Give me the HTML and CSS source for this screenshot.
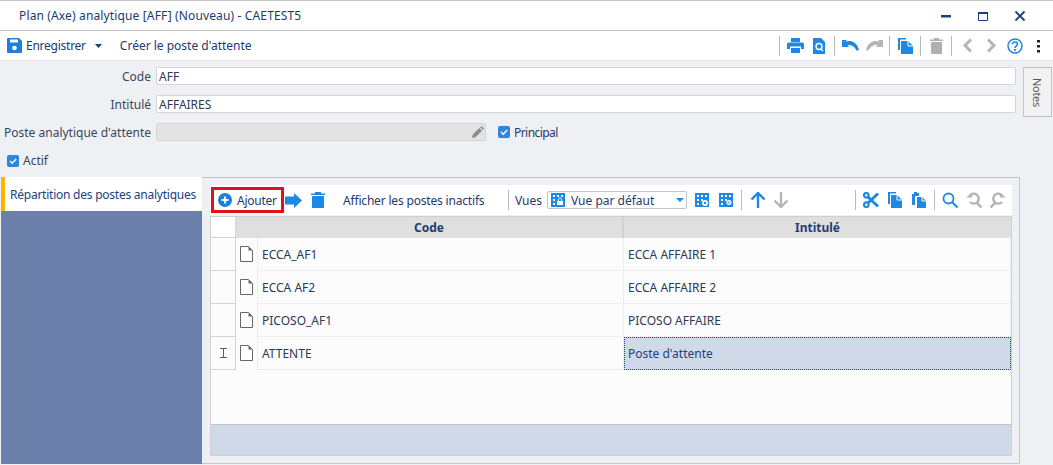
FILE: index.html
```html
<!DOCTYPE html>
<html lang="fr">
<head>
<meta charset="utf-8">
<title>Plan (Axe) analytique</title>
<link rel="stylesheet" href="styles.css">
</head>
<body>
<div class="window">
  <header class="titlebar">
    <span class="title">Plan (Axe) analytique [AFF] (Nouveau) - CAETEST5</span>
    <div class="winctl">
      <svg width="14" height="14" viewBox="0 0 14 14"><path d="M2 6h10v2.500H2z" fill="#1d3f7f"/></svg>
      <svg width="14" height="14" viewBox="0 0 14 14"><path d="M2.500 3.500h9v8h-9z" fill="none" stroke="#1d3f7f"/><path d="M2 3h10v2H2z" fill="#1d3f7f"/></svg>
      <svg width="14" height="14" viewBox="0 0 14 14"><path d="M2.500 2.500l9 9M11.500 2.500l-9 9" stroke="#1d3f7f" stroke-width="1.800"/></svg>
    </div>
  </header>
  <nav class="toolbar">
    <svg class="save" width="15" height="15" viewBox="0 0 15 15"><path d="M1 0h11l3 3v11a1 1 0 0 1-1 1H1a1 1 0 0 1-1-1V1a1 1 0 0 1 1-1z" fill="#1e7fd6"/><path d="M3 1.500h8v3H3z" fill="#fff"/><circle cx="7.500" cy="10" r="2.300" fill="#fff"/></svg>
    <span class="tb-text enreg">Enregistrer</span>
    <svg class="caret" width="7" height="4" viewBox="0 0 7 4"><path d="M0 0h7L3.500 4z" fill="#1d3f6f"/></svg>
    <span class="tb-text create">Créer le poste d'attente</span>
    <div class="tb-right">
      <i class="sep"></i>
      <span class="btn"><svg width="17" height="15" viewBox="0 0 17 15"><path d="M4 0h9v4H4zM1.500 4.500h14A1.500 1.500 0 0 1 17 6v5h-3V8.500H3V11H0V6a1.500 1.500 0 0 1 1.500-1.500zM4 10h9v5H4z" fill="#1e88e5"/></svg></span>
      <span class="btn"><svg width="12" height="16" viewBox="0 0 12 16"><path d="M0 0h8l4 4v12H0z" fill="#1e88e5"/><circle cx="6" cy="8.500" r="3" fill="none" stroke="#fff" stroke-width="1.400"/><path d="M8 11l2 2" stroke="#fff" stroke-width="1.400"/></svg></span>
      <i class="sep"></i>
      <span class="btn"><svg width="17" height="11" viewBox="0 0 17 11"><path d="M0 0l5 0-1.500 1.800C8 0 14 1 17 9.500L15 11C12 5.500 8.500 4.500 5.500 5L7 7H0z" fill="#1e88e5"/></svg></span>
      <span class="btn"><svg width="17" height="11" viewBox="0 0 17 11"><path d="M17 0l-5 0 1.500 1.800C9 0 3 1 0 9.500L2 11C5 5.500 8.500 4.500 11.500 5L10 7h7z" fill="#b5b5b5"/></svg></span>
      <i class="sep"></i>
      <span class="btn"><svg width="15" height="16" viewBox="0 0 15 16"><path d="M0 0h8v1.500H2V12H0z" fill="#1e88e5"/><path d="M3 3h7l5 5v8H3z" fill="#1e88e5"/><path d="M10 3v5h5" fill="none" stroke="#fff"/></svg></span>
      <i class="sep"></i>
      <span class="btn"><svg width="13" height="16" viewBox="0 0 13 16"><path d="M4 0h5v1.500h4V3H0V1.500h4zM1 4h11v12H1z" fill="#b0b0b0"/></svg></span>
      <i class="sep"></i>
      <span class="btn"><svg width="11" height="15" viewBox="0 0 11 15"><path d="M9 1.500L3 7.500l6 6" fill="none" stroke="#b5b5b5" stroke-width="3"/></svg></span>
      <span class="btn"><svg width="11" height="15" viewBox="0 0 11 15"><path d="M2 1.500l6 6-6 6" fill="none" stroke="#b5b5b5" stroke-width="3"/></svg></span>
      <span class="btn"><svg width="16" height="16" viewBox="0 0 16 16"><circle cx="8" cy="8" r="7" fill="none" stroke="#1e88e5" stroke-width="1.500"/><path d="M5.500 6.200C5.500 4.800 6.700 4 8 4s2.500.8 2.500 2.200c0 1.900-2.500 1.900-2.500 3.800" fill="none" stroke="#1e88e5" stroke-width="1.600"/><path d="M7 11h2v1.800H7z" fill="#1e88e5"/></svg></span>
      <span class="btn"><svg width="4" height="14" viewBox="0 0 4 14"><path d="M0 1h3v2.500H0zM0 6h3v2.500H0zM0 11h3v2.500H0z" fill="#222"/></svg></span>
    </div>
  </nav>
  <section class="formarea">
    <div class="form">
      <label class="lbl">Code</label>
      <div class="input wide">AFF</div>
      <label class="lbl">Intitulé</label>
      <div class="input wide">AFFAIRES</div>
      <label class="lbl">Poste analytique d'attente</label>
      <div class="attente">
        <div class="input disabled"><svg width="12" height="12" viewBox="0 0 12 12"><path d="M0 12l.8-3.500 6.500-6.500 2.700 2.700-6.500 6.500zM8.200 1.200L9.400 0 12 2.600l-1.200 1.200z" fill="#8c8c8c"/></svg></div>
        <span class="check"><svg width="12" height="12" viewBox="0 0 12 12"><rect width="12" height="12" rx="2" fill="#2e86de"/><path d="M3 6l2.200 2.200L9.200 4" fill="none" stroke="#fff" stroke-width="1.400"/></svg><span class="principal">Principal</span></span>
      </div>
      <span class="check actif"><svg width="12" height="12" viewBox="0 0 12 12"><rect width="12" height="12" rx="2" fill="#2e86de"/><path d="M3 6l2.200 2.200L9.200 4" fill="none" stroke="#fff" stroke-width="1.400"/></svg><span>Actif</span></span>
    </div>
    <div class="notes"><span>Notes</span></div>
  </section>
  <main class="main">
    <aside class="side">
      <div class="tab">Répartition des postes analytiques</div>
      <div class="side-fill"></div>
    </aside>
    <section class="panel">
      <div class="subbar">
        <button class="add"><svg width="14" height="14" viewBox="0 0 14 14"><circle cx="7" cy="7" r="7" fill="#1e7fd6"/><path d="M3.500 7h7M7 3.500v7" stroke="#fff" stroke-width="1.800"/></svg>Ajouter</button>
        <svg class="arrow" width="17" height="15" viewBox="0 0 17 15"><path d="M0 3.500h9V0l8 7.500-8 7.500v-3.500H0z" fill="#1e88e5"/></svg>
        <svg class="trash" width="14" height="16" viewBox="0 0 14 16"><path d="M4 0h6v1.500h4V3H0V1.500h4zM1 4h12v12H1z" fill="#1e88e5"/></svg>
        <span class="inactive">Afficher les postes inactifs</span>
        <i class="sep s1"></i>
        <span class="vues">Vues</span>
        <div class="select">
          <svg width="14" height="14" viewBox="0 0 14 14"><path d="M0 0h14v14H0z" fill="#1e88e5"/><path d="M2 2h2v2H2zM6 2h2v2H6zM10 2h2v2h-2zM2 6h2v2H2zM2 10h2v2H2zM6 8h6v4H6z" fill="#fff"/><path d="M7.500 8V6.500a1.500 1.500 0 0 1 3 0V8" fill="none" stroke="#fff"/></svg>
          <span class="select-text">Vue par défaut</span>
          <svg class="select-caret" width="8" height="4" viewBox="0 0 8 4"><path d="M0 0h8L4 4z" fill="#1e88e5"/></svg>
        </div>
        <svg class="i1" width="14" height="14" viewBox="0 0 14 14"><path d="M0 0h14v14H0z" fill="#1e88e5"/><path d="M2 2h2v2H2zM6 2h2v2H6zM10 2h2v2h-2zM2 6h2v2H2zM2 10h2v2H2zM6 6h2v2H6z" fill="#fff"/><circle cx="10" cy="10" r="3" fill="#fff"/><circle cx="10" cy="10" r="1.200" fill="#1e88e5"/></svg>
        <svg class="i2" width="14" height="14" viewBox="0 0 14 14"><path d="M0 0h14v14H0z" fill="#1e88e5"/><path d="M2 2h2v2H2zM6 2h2v2H6zM10 2h2v2h-2zM2 6h2v2H2zM2 10h2v2H2zM6 6h2v2H6z" fill="#fff"/><circle cx="10" cy="9.500" r="2.200" fill="#9ecbf2" stroke="#fff"/></svg>
        <i class="sep s2"></i>
        <svg class="up" width="16" height="16" viewBox="0 0 16 16"><path d="M8 1v15M1.500 7.500L8 1l6.500 6.500" fill="none" stroke="#1e88e5" stroke-width="2.400"/></svg>
        <svg class="down" width="16" height="16" viewBox="0 0 16 16"><path d="M8 0v15M1.500 8.500L8 15l6.500-6.500" fill="none" stroke="#b5b5b5" stroke-width="2.400"/></svg>
        <i class="sep s3"></i>
        <svg class="cut" width="16" height="16" viewBox="0 0 16 16"><circle cx="3.300" cy="3.300" r="2.300" fill="none" stroke="#1e88e5" stroke-width="2.200"/><circle cx="3.300" cy="12.700" r="2.300" fill="none" stroke="#1e88e5" stroke-width="2.200"/><path d="M5 5l10 9.500M5 11L15 1.500" stroke="#1e88e5" stroke-width="3"/></svg>
        <svg class="cp" width="14" height="16" viewBox="0 0 14 16"><path d="M0 0h8v1.500H2V12H0z" fill="#1e88e5"/><path d="M3 3h6l5 5v8H3z" fill="#1e88e5"/><path d="M9 3v5h5" fill="none" stroke="#fff"/></svg>
        <svg class="pst" width="14" height="16" viewBox="0 0 14 16"><path d="M2 0h3v1h2v3H3v9H0V2h2z" fill="#1e88e5"/><path d="M5 5h5l4 4v7H5z" fill="#1e88e5"/><path d="M10 5v4h4" fill="none" stroke="#fff"/></svg>
        <i class="sep s4"></i>
        <svg class="z1" width="16" height="16" viewBox="0 0 16 16"><circle cx="6.500" cy="6.500" r="5" fill="none" stroke="#1e88e5" stroke-width="1.800"/><path d="M10 10l5.500 5.500" stroke="#1e88e5" stroke-width="2"/></svg>
        <svg class="z2" width="16" height="16" viewBox="0 0 16 16"><path d="M3.500 4A5 5 0 1 1 4 10" fill="none" stroke="#b5b5b5" stroke-width="2.400"/><path d="M0 5.500h6V1z" fill="#b5b5b5"/><path d="M11 11l4.500 4.500" stroke="#b5b5b5" stroke-width="2.600"/></svg>
        <svg class="z3" width="16" height="16" viewBox="0 0 16 16"><path d="M12.500 4A5 5 0 1 0 12 10" fill="none" stroke="#b5b5b5" stroke-width="2.400"/><path d="M16 5.500h-6V1z" fill="#b5b5b5"/><path d="M5 11L.5 15.500" stroke="#b5b5b5" stroke-width="2.600"/></svg>
      </div>
      <div class="grid">
        <div class="table">
          <div class="corner"></div>
          <div class="hd hd-code">Code</div>
          <div class="hd hd-last">Intitulé</div>

          <div class="rh"></div>
          <div class="ic"><svg width="13" height="16" viewBox="0 0 13 16"><path d="M.5.500h8l4 4v11H.5z" fill="#fff" stroke="#666"/><path d="M8.500.500v4h4" fill="#666"/></svg></div>
          <div class="cell">ECCA_AF1</div>
          <div class="cell">ECCA AFFAIRE 1</div>

          <div class="rh"></div>
          <div class="ic"><svg width="13" height="16" viewBox="0 0 13 16"><path d="M.5.500h8l4 4v11H.5z" fill="#fff" stroke="#666"/><path d="M8.500.500v4h4" fill="#666"/></svg></div>
          <div class="cell">ECCA AF2</div>
          <div class="cell">ECCA AFFAIRE 2</div>

          <div class="rh"></div>
          <div class="ic"><svg width="13" height="16" viewBox="0 0 13 16"><path d="M.5.500h8l4 4v11H.5z" fill="#fff" stroke="#666"/><path d="M8.500.500v4h4" fill="#666"/></svg></div>
          <div class="cell">PICOSO_AF1</div>
          <div class="cell">PICOSO AFFAIRE</div>

          <div class="rh rh-cur"><svg width="7" height="10" viewBox="0 0 7 10"><path d="M0 .500h7M0 9.500h7M3.500 .500v9" fill="none" stroke="#2a66b0"/></svg></div>
          <div class="ic"><svg width="13" height="16" viewBox="0 0 13 16"><path d="M.5.500h8l4 4v11H.5z" fill="#fff" stroke="#666"/><path d="M8.500.500v4h4" fill="#666"/></svg></div>
          <div class="cell">ATTENTE</div>
          <div class="cell selected">Poste d'attente</div>
        </div>
        <div class="grid-fill"></div>
        <div class="grid-foot"></div>
      </div>
    </section>
  </main>
</div>
</body>
</html>
```

FILE: styles.css
```css
* { box-sizing: border-box; }
html, body { margin: 0; padding: 0; }
body {
  font-family: "Noto Sans", "DejaVu Sans", sans-serif;
  font-size: 12px;
  color: #2b3a55;
  background: #eff0f4;
  overflow: hidden;
}
.window { width: 1053px; height: 465px; display: flex; flex-direction: column; border-top: 1px solid #c4c4c4; }
.titlebar {
  height: 30px; flex: none; background: #fff; border-bottom: 1px solid #c4c4c4;
  display: flex; align-items: center; padding-left: 19px;
}
.title { color: #1d3a6e; letter-spacing: .14px; }
.winctl { margin-left: auto; display: flex; gap: 23px; padding-right: 26px; }
.toolbar {
  height: 30px; flex: none; background: #fff; display: flex; align-items: center; padding-left: 7px;
  border-bottom: 1px solid #e4e4e6;
}
.tb-text { color: #1d3a6e; }
.enreg { letter-spacing: -.25px; }
.save { margin-right: 4px; }
.caret { margin-left: 9px; }
.create { margin-left: 18px; }
.tb-right { margin-left: auto; display: flex; align-items: center; padding-right: 2px; }
.btn { width: 24px; display: flex; justify-content: center; align-items: center; }
.sep { display: block; width: 1px; height: 20px; background: #b8b8b8; flex: none; margin: 0 3px; }
.formarea { height: 116px; flex: none; display: flex; align-items: flex-start; padding-top: 6px; }
.form {
  width: 1016px; flex: none; display: grid; grid-template-columns: 151px 1fr; column-gap: 5px;
  grid-auto-rows: 18px; row-gap: 10px;
}
.lbl { text-align: right; line-height: 18px; padding-top: 1px; white-space: nowrap; color: #3a4658; }
.input {
  height: 18px; background: #fff; border: 1px solid #d5d5d8; border-radius: 2px; line-height: 18px; padding-left: 2px;
  color: #2b3a55;
}
.attente { display: flex; align-items: center; }
.disabled { width: 330px; background: #e3e3e3; display: flex; align-items: center; justify-content: flex-end; padding-right: 1px; }
.check { display: flex; align-items: center; gap: 4px; color: #1d3a6e; line-height: 18px; }
.check span { margin-top: 2px; }
.principal { letter-spacing: -.55px; }
.attente .check { margin-left: 12px; }
.actif { grid-column: 1 / 3; margin: 2px 0 0 7px; color: #3a4658; }
.actif span { margin-top: 0; }
.notes {
  margin-left: 7px; width: 29px; height: 50px; flex: none; background: #f2f2f2; border: 1px solid #c4c4c4;
  display: flex; align-items: center; justify-content: center;
}
.notes span { writing-mode: vertical-rl; color: #555; font-size: 11px; letter-spacing: -.3px; }
.main { height: 287px; flex: none; display: flex; padding-left: 1px; }
.side { width: 201px; flex: none; display: flex; flex-direction: column; }
.tab {
  height: 34px; flex: none; background: #fff; border-left: 4px solid #ffb400; padding: 1px 0 0 5px; line-height: 33px;
  color: #1d3f7f; white-space: nowrap; letter-spacing: -.24px;
}
.side-fill { flex: 1; background: #6a7fa9; }
.panel {
  width: 818px; flex: none; display: flex; flex-direction: column; padding: 7px 7px 7px 8px;
  border-top: 1px solid #c4c4c4; border-right: 1px solid #c8c8c8; border-bottom: 1px solid #c8c8c8;
}
.subbar { height: 30px; flex: none; background: #fff; display: flex; align-items: center; padding-left: 1px; position: relative; }
.add {
  width: 73px; height: 26px; border: 3px solid #e2101c; background: #fff; padding: 0 0 0 4px; margin: 0;
  display: flex; align-items: center; gap: 5px; font: inherit; color: #1d3a6e; letter-spacing: -.25px;
}
.arrow { margin-left: 1px; }
.trash { margin-left: 9px; }
.inactive { margin-left: 18px; color: #1d3a6e; width: 165px; white-space: nowrap; flex: none; letter-spacing: -.18px; }
.s1 { margin: 0 6px 0 0; }
.vues { color: #1d3a6e; width: 32px; flex: none; }
.select {
  width: 140px; height: 18px; flex: none; border: 1px solid #c4c4c8; border-radius: 2px; display: flex; align-items: center;
  padding-left: 3px; color: #1d3a6e;
}
.select-text { margin-left: 6px; }
.select-caret { margin-left: auto; margin-right: 2px; }
.i1 { margin-left: 8px; }
.i2 { margin-left: 10px; }
.s2 { margin: 0 0 0 8px; }
.up { margin-left: 8px; }
.down { margin-left: 7px; }
.s3 { margin: 0 0 0 66px; }
.cut { margin-left: 7px; }
.cp { margin-left: 9px; }
.pst { margin-left: 10px; }
.s4 { margin: 0 0 0 8px; }
.z1 { margin-left: 7px; }
.z2 { margin-left: 8px; }
.z3 { margin-left: 8px; }
.grid { flex: 1; display: flex; flex-direction: column; border: 1px solid #cfcfcf; margin-top: 1px; background: #fcfcfc; }
.table {
  display: grid; grid-template-columns: 25px 22px 366px 1fr; grid-template-rows: 21px 33px 33px 33px 33px; flex: none;
}
.corner { background: #fff; border-right: 1px solid #d4d4d4; border-bottom: 1px solid #d4d4d4; }
.hd {
  background: #dfdfdf; font-weight: bold; color: #1f3d73; text-align: center; line-height: 21px;
}
.hd-code { grid-column: span 2; border-right: 2px solid #d2d2d2; }
.rh { background: #fcfcfc; border-right: 1px solid #d4d4d4; border-bottom: 1px solid #d4d4d4; display: flex; align-items: center; justify-content: center; }
.ic { display: flex; align-items: center; justify-content: center; padding-bottom: 2px; border-right: 1px solid #efefef; }
.cell {
  border-bottom: 1px solid #efefef; border-right: 1px solid #efefef; line-height: 32px; padding: 1px 0 0 4px;
  color: #2b3a55; white-space: nowrap;
}
.selected { background: #d0d9e7; border: 1px dotted #123f9a; line-height: 31px; padding: 0 0 0 3px; color: #1d3f7f; }
.grid-fill { flex: 1; border-bottom: 1px solid #c4c4c4; }
.grid-foot { height: 30px; flex: none; background: #d0d9e7; }
```
